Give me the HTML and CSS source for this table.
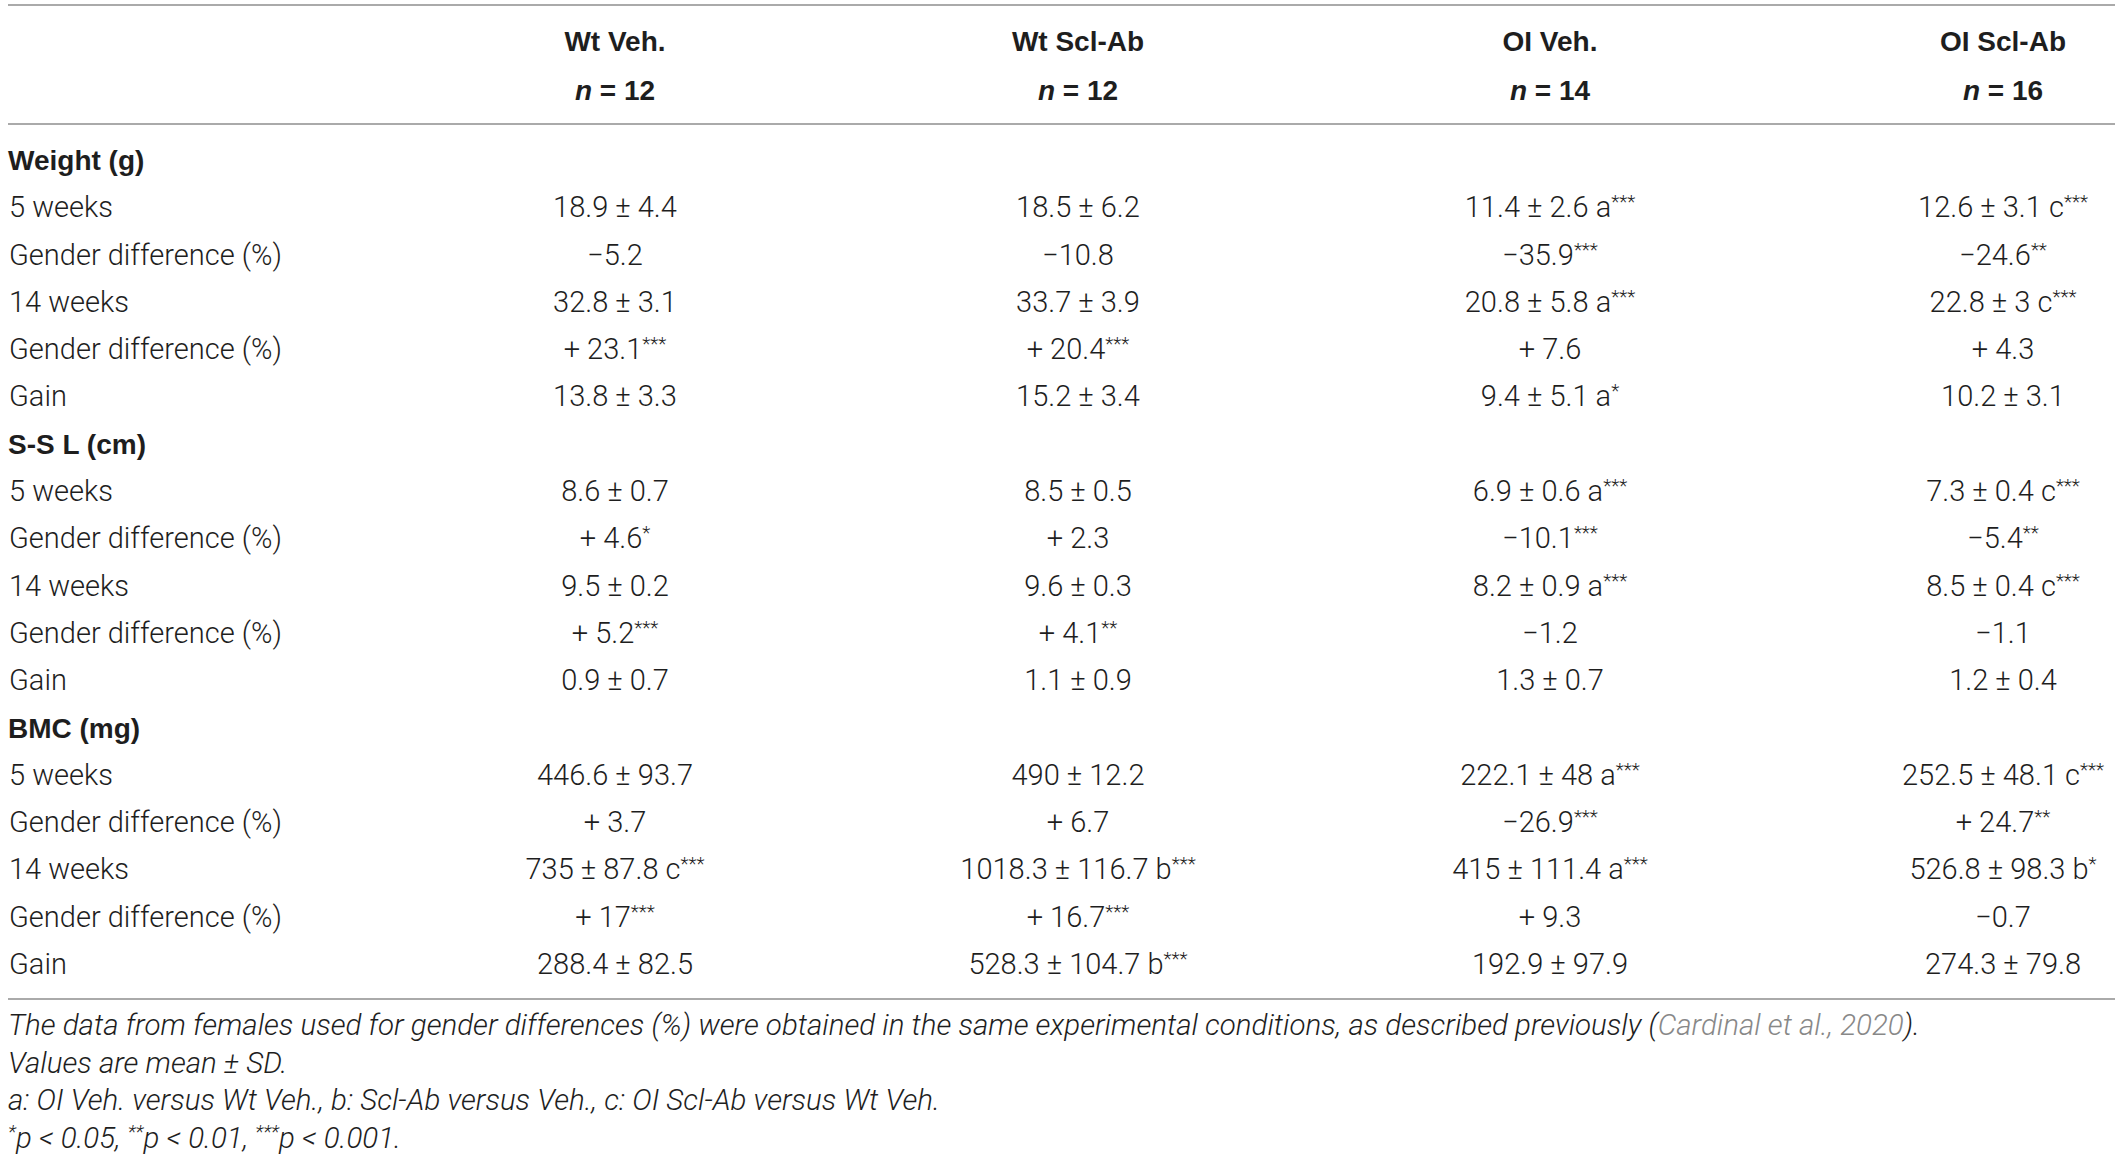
FILE: index.html
```html
<!DOCTYPE html>
<html lang="en">

<head>
    <meta charset="UTF-8">
    <meta name="viewport" content="width=device-width, initial-scale=1.0">
    <title>Table</title>
    <link rel="stylesheet" href="styles.css">
</head>

<body>
    <div class="wrap">
        <table class="data">
            <colgroup>
                <col class="c-label">
                <col class="c-1">
                <col class="c-2">
                <col class="c-3">
                <col class="c-4">
            </colgroup>
            <thead>
                <tr>
                    <th></th>
                    <th>Wt Veh.<br><i>n</i> = 12</th>
                    <th>Wt Scl-Ab<br><i>n</i> = 12</th>
                    <th>OI Veh.<br><i>n</i> = 14</th>
                    <th>OI Scl-Ab<br><i>n</i> = 16</th>
                </tr>
            </thead>
            <tbody>
                <!--Weight-->
                <tr class="group first">
                    <td>Weight (g)</td><td></td><td></td><td></td><td></td>
                </tr>
                <tr>
                    <td>5 weeks</td>
                    <td>18.9 ± 4.4</td>
                    <td>18.5 ± 6.2</td>
                    <td>11.4 ± 2.6 a<sup>***</sup></td>
                    <td>12.6 ± 3.1 c<sup>***</sup></td>
                </tr>
                <tr>
                    <td>Gender difference (%)</td>
                    <td>−5.2</td>
                    <td>−10.8</td>
                    <td>−35.9<sup>***</sup></td>
                    <td>−24.6<sup>**</sup></td>
                </tr>
                <tr>
                    <td>14 weeks</td>
                    <td>32.8 ± 3.1</td>
                    <td>33.7 ± 3.9</td>
                    <td>20.8 ± 5.8 a<sup>***</sup></td>
                    <td>22.8 ± 3 c<sup>***</sup></td>
                </tr>
                <tr>
                    <td>Gender difference (%)</td>
                    <td>+ 23.1<sup>***</sup></td>
                    <td>+ 20.4<sup>***</sup></td>
                    <td>+ 7.6</td>
                    <td>+ 4.3</td>
                </tr>
                <tr>
                    <td>Gain</td>
                    <td>13.8 ± 3.3</td>
                    <td>15.2 ± 3.4</td>
                    <td>9.4 ± 5.1 a<sup>*</sup></td>
                    <td>10.2 ± 3.1</td>
                </tr>
                <!--S-S L-->
                <tr class="group">
                    <td>S-S L (cm)</td><td></td><td></td><td></td><td></td>
                </tr>
                <tr>
                    <td>5 weeks</td>
                    <td>8.6 ± 0.7</td>
                    <td>8.5 ± 0.5</td>
                    <td>6.9 ± 0.6 a<sup>***</sup></td>
                    <td>7.3 ± 0.4 c<sup>***</sup></td>
                </tr>
                <tr>
                    <td>Gender difference (%)</td>
                    <td>+ 4.6<sup>*</sup></td>
                    <td>+ 2.3</td>
                    <td>−10.1<sup>***</sup></td>
                    <td>−5.4<sup>**</sup></td>
                </tr>
                <tr>
                    <td>14 weeks</td>
                    <td>9.5 ± 0.2</td>
                    <td>9.6 ± 0.3</td>
                    <td>8.2 ± 0.9 a<sup>***</sup></td>
                    <td>8.5 ± 0.4 c<sup>***</sup></td>
                </tr>
                <tr>
                    <td>Gender difference (%)</td>
                    <td>+ 5.2<sup>***</sup></td>
                    <td>+ 4.1<sup>**</sup></td>
                    <td>−1.2</td>
                    <td>−1.1</td>
                </tr>
                <tr>
                    <td>Gain</td>
                    <td>0.9 ± 0.7</td>
                    <td>1.1 ± 0.9</td>
                    <td>1.3 ± 0.7</td>
                    <td>1.2 ± 0.4</td>
                </tr>
                <!--BMC-->
                <tr class="group">
                    <td>BMC (mg)</td><td></td><td></td><td></td><td></td>
                </tr>
                <tr>
                    <td>5 weeks</td>
                    <td>446.6 ± 93.7</td>
                    <td>490 ± 12.2</td>
                    <td>222.1 ± 48 a<sup>***</sup></td>
                    <td>252.5 ± 48.1 c<sup>***</sup></td>
                </tr>
                <tr>
                    <td>Gender difference (%)</td>
                    <td>+ 3.7</td>
                    <td>+ 6.7</td>
                    <td>−26.9<sup>***</sup></td>
                    <td>+ 24.7<sup>**</sup></td>
                </tr>
                <tr>
                    <td>14 weeks</td>
                    <td>735 ± 87.8 c<sup>***</sup></td>
                    <td>1018.3 ± 116.7 b<sup>***</sup></td>
                    <td>415 ± 111.4 a<sup>***</sup></td>
                    <td>526.8 ± 98.3 b<sup>*</sup></td>
                </tr>
                <tr>
                    <td>Gender difference (%)</td>
                    <td>+ 17<sup>***</sup></td>
                    <td>+ 16.7<sup>***</sup></td>
                    <td>+ 9.3</td>
                    <td>−0.7</td>
                </tr>
                <tr class="last">
                    <td>Gain</td>
                    <td>288.4 ± 82.5</td>
                    <td>528.3 ± 104.7 b<sup>***</sup></td>
                    <td>192.9 ± 97.9</td>
                    <td>274.3 ± 79.8</td>
                </tr>
            </tbody>
        </table>
        <div class="notes">
            <p>The data from females used for gender differences (%) were obtained in the same experimental conditions, as described previously (<a href="#">Cardinal et al., 2020</a>).</p>
            <p>Values are mean ± SD.</p>
            <p>a: OI Veh. versus Wt Veh., b: Scl-Ab versus Veh., c: OI Scl-Ab versus Wt Veh.</p>
            <p><sup>*</sup>p &lt; 0.05, <sup>**</sup>p &lt; 0.01, <sup>***</sup>p &lt; 0.001.</p>
        </div>
    </div>
</body>

</html>
```

FILE: styles.css
```css
* {
    margin: 0;
    padding: 0
}

body {
    background-color: #fff;
    color: #1e1e1e;
    font-family: Roboto, "Liberation Sans", sans-serif;
}

.wrap {
    width: 2107px;
    padding: 4px 0 0 8px;
}

.data {
    width: 2107px;
    table-layout: fixed;
    border-collapse: separate;
    border-spacing: 0;
    font-size: 29px;
    font-weight: 300;
}

.c-label {
    width: 275px;
}

.c-1 {
    width: 664px;
}

.c-2 {
    width: 262px;
}

.c-3 {
    width: 682px;
}

.c-4 {
    width: 224px;
}

.data th {
    font-family: "Liberation Sans", Arial, sans-serif;
    font-size: 28px;
    font-weight: 700;
    line-height: 49px;
    padding: 11px 0 8px;
    border-top: 2px solid #aaa;
    border-bottom: 2px solid #aaa;
    text-align: center;
}

.data td {
    line-height: 47.3px;
    text-align: center;
    white-space: nowrap;
}

.data td:first-child {
    text-align: left;
    padding-left: 1px;
}

.data tr.first td {
    padding-top: 12px;
}

.data tr.last td {
    padding-bottom: 10px;
    border-bottom: 2px solid #aaa;
}

.data tr.group td:first-child {
    font-family: "Liberation Sans", Arial, sans-serif;
    font-size: 28px;
    font-weight: 700;
    padding-left: 0;
}

sup {
    font-size: 0.65em;
    line-height: 0;
    vertical-align: 0.5em;
}

.notes {
    padding-top: 7px;
    font-size: 29.5px;
    font-style: italic;
    font-weight: 300;
}

.notes p {
    line-height: 37.5px;
}

.notes a {
    color: #888;
    text-decoration: none;
}
```
